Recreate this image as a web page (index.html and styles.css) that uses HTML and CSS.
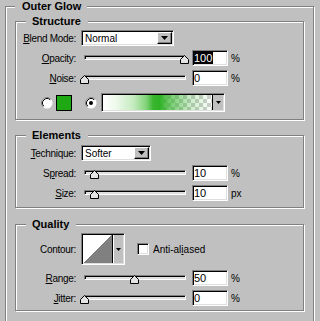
FILE: index.html
```html
<!doctype html>
<html>
  <head>
    <meta charset="utf-8">
    <title>Layer Style: Outer Glow</title>
    <link rel="stylesheet" href="styles.css">
  </head>
  <body>
    <fieldset class="panel">
      <legend>Outer Glow</legend>

      <fieldset class="group group-structure">
        <legend>Structure</legend>
        <div class="rows">
          <span class="label"><u>B</u>lend Mode:</span>
          <div class="select select-blend sunken">
            <span>Normal</span>
            <span class="drop-btn"><svg width="7" height="4" viewBox="0 0 7 4"><polygon points="0,0 7,0 3.5,4" fill="#000"/></svg></span>
          </div>

          <span class="label"><u>O</u>pacity:</span>
          <div class="slider">
            <div class="track sunken"></div>
            <svg class="thumb" style="left: 99px" width="9" height="9" viewBox="0 0 9 9"><polygon points="0.5,8.5 0.5,4.5 4.5,0.5 8.5,4.5 8.5,8.5" fill="#e4e4e4" stroke="#000"/></svg>
          </div>
          <div class="num sunken"><span class="sel">100</span></div>
          <span class="unit">%</span>

          <span class="label"><u>N</u>oise:</span>
          <div class="slider">
            <div class="track sunken"></div>
            <svg class="thumb" style="left: -1px" width="9" height="9" viewBox="0 0 9 9"><polygon points="0.5,8.5 0.5,4.5 4.5,0.5 8.5,4.5 8.5,8.5" fill="#e4e4e4" stroke="#000"/></svg>
          </div>
          <div class="num sunken">0</div>
          <span class="unit">%</span>

          <div class="color-row">
            <svg class="radio" width="12" height="12" viewBox="0 0 12 12">
              <circle cx="6" cy="6" r="5.5" fill="#fff"/>
              <path d="M2.11,9.89 A5.5,5.5 0 0 1 9.89,2.11" fill="none" stroke="#808080"/>
              <path d="M2.82,9.18 A4.5,4.5 0 0 1 9.18,2.82" fill="none" stroke="#000"/>
            </svg>
            <span class="swatch"></span>
            <svg class="radio radio-on" width="12" height="12" viewBox="0 0 12 12">
              <circle cx="6" cy="6" r="5.5" fill="#fff"/>
              <path d="M2.11,9.89 A5.5,5.5 0 0 1 9.89,2.11" fill="none" stroke="#808080"/>
              <path d="M2.82,9.18 A4.5,4.5 0 0 1 9.18,2.82" fill="none" stroke="#000"/>
              <circle cx="6" cy="6" r="2" fill="#000"/>
            </svg>
            <div class="gradient sunken">
              <span class="gradient-fill"></span>
              <span class="gradient-btn"><svg width="5" height="3" viewBox="0 0 5 3"><polygon points="0,0 5,0 2.5,3" fill="#000"/></svg></span>
            </div>
          </div>
        </div>
      </fieldset>

      <fieldset class="group group-elements">
        <legend>Elements</legend>
        <div class="rows">
          <span class="label"><u>T</u>echnique:</span>
          <div class="select select-technique sunken">
            <span>Softer</span>
            <span class="drop-btn"><svg width="7" height="4" viewBox="0 0 7 4"><polygon points="0,0 7,0 3.5,4" fill="#000"/></svg></span>
          </div>

          <span class="label">S<u>p</u>read:</span>
          <div class="slider">
            <div class="track sunken"></div>
            <svg class="thumb" style="left: 9px" width="9" height="9" viewBox="0 0 9 9"><polygon points="0.5,8.5 0.5,4.5 4.5,0.5 8.5,4.5 8.5,8.5" fill="#e4e4e4" stroke="#000"/></svg>
          </div>
          <div class="num sunken">10</div>
          <span class="unit">%</span>

          <span class="label"><u>S</u>ize:</span>
          <div class="slider">
            <div class="track sunken"></div>
            <svg class="thumb" style="left: 9px" width="9" height="9" viewBox="0 0 9 9"><polygon points="0.5,8.5 0.5,4.5 4.5,0.5 8.5,4.5 8.5,8.5" fill="#e4e4e4" stroke="#000"/></svg>
          </div>
          <div class="num sunken">10</div>
          <span class="unit">px</span>
        </div>
      </fieldset>

      <fieldset class="group group-quality">
        <legend>Quality</legend>
        <div class="rows">
          <span class="label">Contour:</span>
          <div class="contour-row">
            <div class="contour sunken">
              <span class="contour-curve"></span>
              <span class="contour-btn"><svg width="5" height="3" viewBox="0 0 5 3"><polygon points="0,0 5,0 2.5,3" fill="#000"/></svg></span>
            </div>
            <span class="checkbox sunken"></span>
            <span class="check-label">Anti-al<u>i</u>ased</span>
          </div>

          <span class="label"><u>R</u>ange:</span>
          <div class="slider">
            <div class="track sunken"></div>
            <svg class="thumb" style="left: 49px" width="9" height="9" viewBox="0 0 9 9"><polygon points="0.5,8.5 0.5,4.5 4.5,0.5 8.5,4.5 8.5,8.5" fill="#e4e4e4" stroke="#000"/></svg>
          </div>
          <div class="num sunken">50</div>
          <span class="unit">%</span>

          <span class="label"><u>J</u>itter:</span>
          <div class="slider">
            <div class="track sunken"></div>
            <svg class="thumb" style="left: -1px" width="9" height="9" viewBox="0 0 9 9"><polygon points="0.5,8.5 0.5,4.5 4.5,0.5 8.5,4.5 8.5,8.5" fill="#e4e4e4" stroke="#000"/></svg>
          </div>
          <div class="num sunken">0</div>
          <span class="unit">%</span>
        </div>
      </fieldset>
    </fieldset>
  </body>
</html>
```

FILE: styles.css
```css
* {
  box-sizing: border-box;
}

html, body {
  background: #c0c0c0;
  color: #000;
  font-family: "Liberation Sans", Arial, sans-serif;
  font-size: 10px;
  height: 100%;
  margin: 0;
  overflow: hidden;
}

/* Etched group frames */
fieldset {
  border: 1px solid #808080;
  box-shadow: inset 1px 1px #fff, 1px 1px #fff;
  min-width: 0;
}

legend {
  background: #c0c0c0;
  font-size: 11px;
  font-weight: bold;
  height: 13px;
  line-height: 13px;
}

.panel {
  width: 309px;
  margin: 0 0 0 5px;
  padding: 2px 9px 20px;
}

.panel > legend {
  padding: 0 6px 0 7px;
}

.group {
  margin: 0 0 9px;
  padding: 0;
}

.group > legend {
  margin-left: 10px;
  padding: 0 7px 0 6px;
}

.group-elements {
  margin-bottom: 10px;
}

.rows {
  display: grid;
  grid-template-columns: 65px 111px 39px 1fr;
  row-gap: 4px;
  align-items: center;
}

.group-structure .rows {
  padding: 2px 0 7px;
}

.group-elements .rows {
  padding: 3px 0 6px;
}

.group-quality .rows {
  padding: 2px 0 4px;
}

.label {
  padding-right: 5px;
  letter-spacing: -0.3px;
  text-align: right;
  white-space: nowrap;
}

/* Sunken 2px bevel used by fields, tracks and boxes */
.sunken {
  border: 1px solid;
  border-color: #808080 #fff #fff #808080;
  box-shadow: inset 1px 1px #000, inset -1px -1px #dfdfdf;
}

.select {
  grid-column: 2 / -1;
  display: flex;
  align-items: center;
  height: 16px;
  padding: 1px 1px 1px 3px;
  background: #fff;
}

.select-blend {
  width: 93px;
}

.select-technique {
  width: 70px;
}

.drop-btn {
  display: flex;
  align-items: center;
  justify-content: center;
  width: 15px;
  height: 12px;
  margin-left: auto;
  background: #c0c0c0;
  border: 1px solid;
  border-color: #fff #000 #000 #fff;
  box-shadow: inset -1px -1px #808080;
}

.slider {
  position: relative;
  width: 108px;
  height: 16px;
}

.track {
  height: 5px;
  margin: 5px 3px 0;
  background: #dfdfdf;
}

.thumb {
  position: absolute;
  top: 5px;
}

.num {
  width: 36px;
  height: 16px;
  padding: 0 0 0 1px;
  background: #fff;
  font-size: 11px;
  line-height: 14px;
}

.sel {
  display: inline-block;
  margin-left: -1px;
  padding: 0 1px;
  background: #000;
  color: #fff;
  line-height: 12px;
}

.unit {
  font-size: 10px;
}

.color-row {
  grid-column: 1 / -1;
  display: flex;
  align-items: center;
  height: 19px;
  margin-top: 3px;
  padding-left: 25px;
}

.swatch {
  width: 16px;
  height: 16px;
  margin: 0 13px 0 3px;
  background: #1ea814;
  border: 1px solid #000;
}

.gradient {
  display: flex;
  width: 124px;
  height: 19px;
  margin-left: 4px;
  padding: 1px;
}

.gradient-fill {
  flex: 1;
  background:
    linear-gradient(90deg, #fff 0%, #eef9ec 12%, #c4ebbf 28%, #7fd276 40%, #39b52f 46%, #2fb326 52%, rgba(47, 179, 38, 0.7) 60%, rgba(47, 179, 38, 0.25) 80%, rgba(47, 179, 38, 0) 100%),
    repeating-conic-gradient(#fff 0 25%, #cfcfcf 0 50%) 0 0 / 8px 8px;
}

.gradient-btn {
  display: flex;
  align-items: center;
  justify-content: center;
  width: 11px;
  background: #c0c0c0;
  border-left: 1px solid #000;
}

.contour-row {
  grid-column: 2 / -1;
  display: flex;
  align-items: center;
  margin-bottom: 1px;
}

.contour {
  display: flex;
  width: 44px;
  height: 32px;
  padding: 1px;
}

.contour-curve {
  flex: 1;
  background: linear-gradient(to bottom right, #fff 50%, #808080 50%);
}

.contour-btn {
  display: flex;
  align-items: center;
  justify-content: center;
  width: 11px;
  background: #c0c0c0;
  border-left: 1px solid #000;
  box-shadow: inset 1px 0 #fff;
}

.checkbox {
  width: 12px;
  height: 12px;
  margin: 0 4px 0 12px;
  background: #fff;
}
```
